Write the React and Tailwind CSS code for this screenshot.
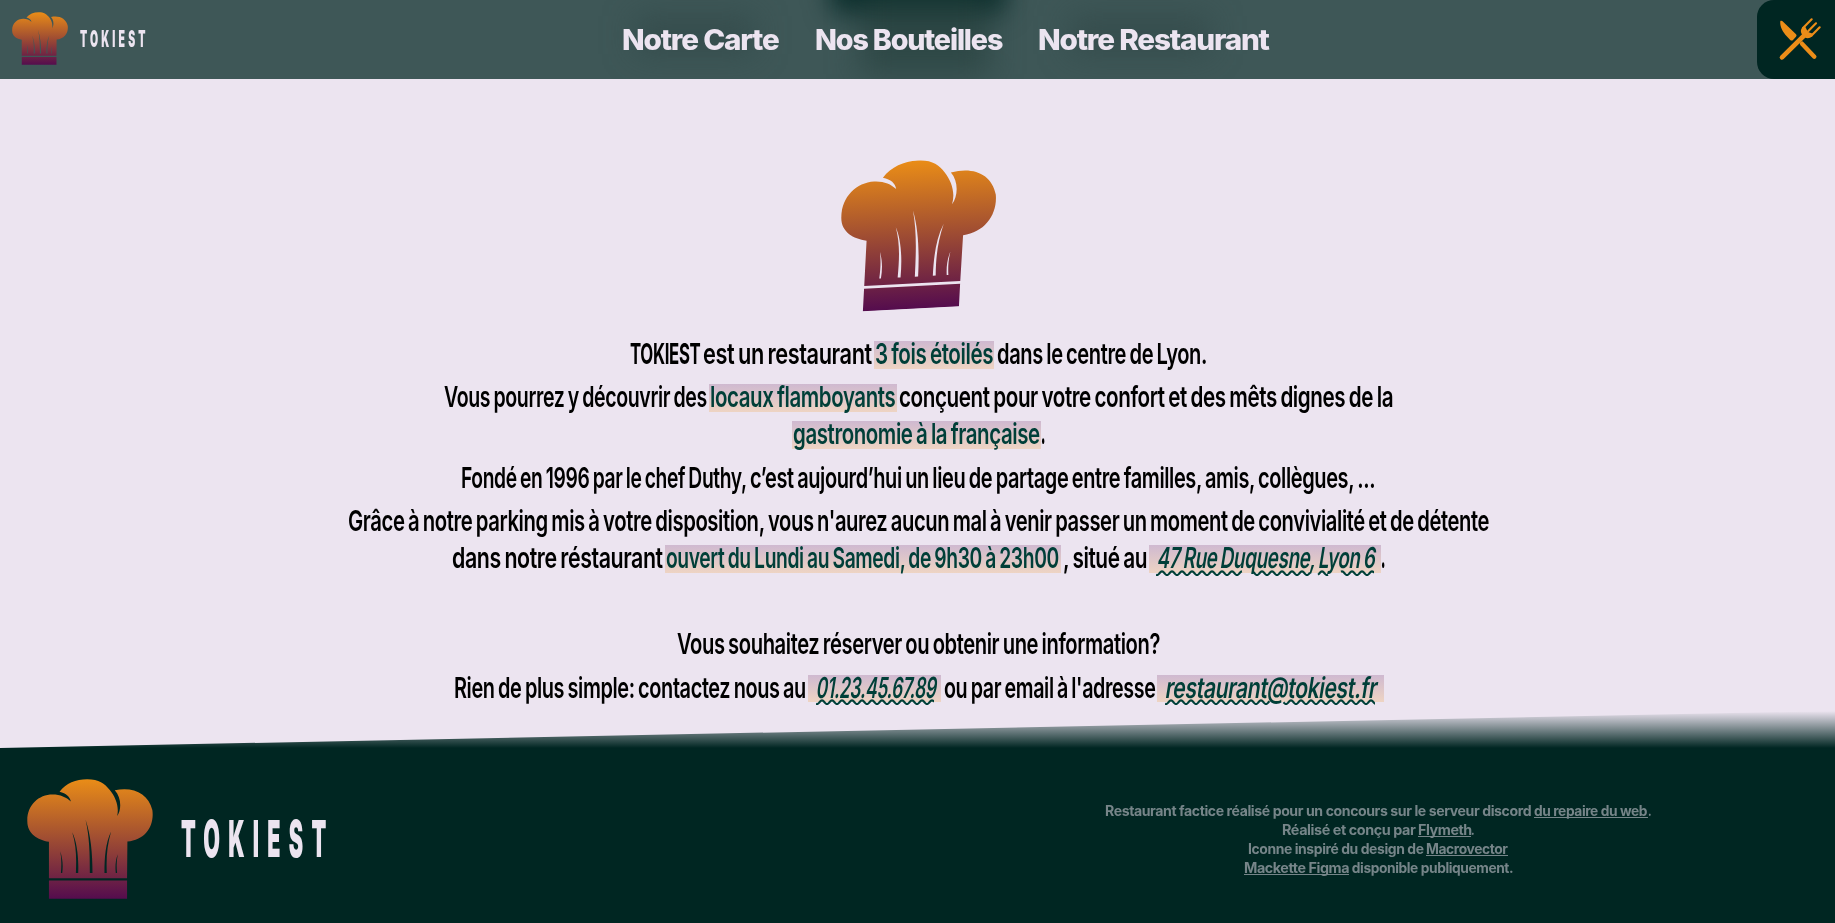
import { useId, useLayoutEffect, useRef, useState } from "react";
import clsx from "clsx";

/* Single-line text squeezed horizontally to a given width. */
function Fit({ w, className, children }) {
  const ref = useRef(null);
  const [scale, setScale] = useState(1);
  useLayoutEffect(() => {
    setScale(w / ref.current.offsetWidth);
  }, [w]);
  return (
    <span className={clsx("inline-flex shrink-0 whitespace-pre", className)} style={{ width: w }}>
      <span ref={ref} className="inline-block shrink-0 origin-left" style={{ transform: `scaleX(${scale})` }}>
        {children}
      </span>
    </span>
  );
}

function ChefHat({ className }) {
  const id = useId();
  return (
    <svg viewBox="81 237 379 359" className={className} preserveAspectRatio="none" aria-hidden="true">
      <defs>
        <linearGradient id={id} gradientUnits="userSpaceOnUse" x1="0" y1="237" x2="0" y2="596">
          <stop offset="0" stopColor="#ea8d17" />
          <stop offset="1" stopColor="#540c4e" />
        </linearGradient>
      </defs>
      <path
        fill={`url(#${id})`}
        fillRule="evenodd"
        d="M147 534V425C113 419 82 400 82 364C80 316 115 283 158 283C181 283 199 291 213 304C210 290 199 280 179 275C198 250 228 238 262 238C298 238 314 251 330 270C348 292 359 321 352 348C366 328 365 293 345 271C399 259 446 280 458 330C465 378 436 420 383 424L382 534Z
        M181 453C188 474 190 495 187 518H183C185 495 185 474 181 453Z
        M217 396C231 425 237 470 235 518H228C230 470 229 435 217 396Z
        M257 358C273 405 278 460 278 518H270C270 460 269 410 257 358Z
        M334 394C322 435 319 470 321 518H314C314 470 317 430 334 394Z
        M354 462C350 482 350 500 352 518H348C346 500 347 480 354 462Z
        M147 541H382V595H147Z"
      />
    </svg>
  );
}

function Cutlery({ className }) {
  return (
    <svg viewBox="130 50 132 132" className={className} fill="none" stroke="#ec8d18" strokeLinecap="round" aria-hidden="true">
      <path
        fill="#ec8d18"
        stroke="none"
        d="M137 62C140 60 143 62 146 65L181 99C186 103 187 106 184 109L175 119C172 122 169 121 166 118L152 103C142 91 135 76 137 62Z"
      />
      <path d="M202 130L239 169" strokeWidth="13" />
      <path d="M142 171L213 101" strokeWidth="14" />
      <path d="M231 57L205 83M244 69L221 92M255 81L230 106" strokeWidth="6.5" />
      <path fill="#ec8d18" stroke="none" d="M203 81C197 89 197 96 203 104L210 111C217 115 225 115 233 108L235 100L222 96L217 90L211 78Z" />
    </svg>
  );
}

function Wave({ w, gaps = [] }) {
  const segs = [];
  let start = 0;
  for (const [a, b] of [...gaps, [w, w]]) {
    segs.push([start, a]);
    start = b;
  }
  const d = segs
    .map(([a, b]) => {
      let p = "";
      for (let x = a; x <= b; x += 0.5) {
        p += `${p ? "L" : "M"}${x} ${(3.2 - 1.8 * Math.cos(((x - 6) * 2 * Math.PI) / 10)).toFixed(2)}`;
      }
      return p;
    })
    .join("");
  return (
    <svg width={w} height="7" className="absolute left-[7.5px] top-[24.5px]" fill="none" stroke="#004039" strokeWidth="2.1" aria-hidden="true">
      <path d={d} />
    </svg>
  );
}

function Mark({ w, children }) {
  return (
    <span className="mt-px flex h-[28px] justify-center bg-[linear-gradient(#cfb9d0,#eed4c3)] leading-[26px] text-[#003f38]" style={{ width: w }}>
      {children}
    </span>
  );
}

function MarkLink({ w, textW, waveW, gaps, href, children }) {
  return (
    <a href={href} className="relative mt-px flex h-[27.5px] bg-[linear-gradient(#cfb9d0,#eed4c3)] pl-[9px] leading-[26px] text-[#003f38]" style={{ width: w }}>
      <Fit w={textW} className="-skew-x-[9deg]">{children}</Fit>
      <Wave w={waveW} gaps={gaps} />
    </a>
  );
}

function Line({ className, children }) {
  return <span className={clsx("flex h-[37px] justify-center leading-[28px]", className ?? "pl-px")}>{children}</span>;
}

function FootLink({ w, children }) {
  return (
    <a href="#" className="inline-flex h-[16.5px] border-b border-[#768589]">
      <Fit w={w}>{children}</Fit>
    </a>
  );
}

export default function App() {
  return (
    <div className="flex h-[923px] w-[1835px] flex-col overflow-hidden bg-[#ece4f0] font-['Inter',sans-serif]">
      <header className="relative flex h-[79px] shrink-0 items-center justify-between overflow-hidden bg-[#3e5757]">
        <div className="absolute left-[830px] -top-[50px] h-[64px] w-[176px] rounded-xl bg-[#0b2e2c] blur-[13px]" />
        <div className="absolute left-[860px] -top-[10px] h-[84px] w-[130px] bg-[#233d3b]/60 blur-[16px]" />
        <div className="absolute left-[635px] top-[16px] h-[38px] w-[120px] bg-[#2c4242]/50 blur-[16px]" />
        <div className="absolute left-[1070px] top-[16px] h-[38px] w-[140px] bg-[#2c4242]/50 blur-[16px]" />

        <a href="#" className="relative flex w-[400px] items-center pl-[12px]">
          <ChefHat className="mb-[2px] h-[53px] w-[56px]" />
          <Fit w={68.5} className="ml-[12px] text-[22.5px] leading-none font-black tracking-[0.3em] text-[#ece4f0]">TOKIEST</Fit>
        </a>

        <nav className="relative flex gap-[36px] pl-[55px] pt-px text-[28.5px] font-extrabold tracking-[-0.04em] text-[#ece4f0]">
          <a href="#"><Fit w={157}>Notre Carte</Fit></a>
          <a href="#"><Fit w={187}>Nos Bouteilles</Fit></a>
          <a href="#"><Fit w={231}>Notre Restaurant</Fit></a>
        </nav>

        <div className="relative flex w-[400px] justify-end">
          <button className="flex h-[79px] w-[78px] items-center rounded-l-[17px] bg-[#002622] pl-[21px]">
            <Cutlery className="mb-[2px] size-[44px]" />
          </button>
        </div>
      </header>

      <main className="flex h-[632px] shrink-0 flex-col items-center pt-[81px] text-[29px] font-semibold text-black">
        <ChefHat className="h-[149px] w-[154.5px] -skew-x-3 -skew-y-3" />

        <div className="mt-[30.9px] flex flex-col gap-[6.5px] tracking-[-0.02em] [word-spacing:-0.06em]">
          <p>
            <Line>
              <Fit w={73} className="font-bold">{"TOKIEST "}</Fit>
              <Fit w={169}>est un restaurant</Fit>
              <span className="ml-[2px] mr-[2.5px]"><Mark w={120.5}><Fit w={118}>3 fois étoilés</Fit></Mark></span>
              <Fit w={210}>dans le centre de Lyon.</Fit>
            </Line>
          </p>
          <p>
            <Line>
              <Fit w={263}>Vous pourrez y découvrir des</Fit>
              <span className="ml-[2px] mr-[2px]"><Mark w={188}><Fit w={185}>locaux flamboyants</Fit></Mark></span>
              <Fit w={494}>conçuent pour votre confort et des mêts dignes de la</Fit>
            </Line>
            <Line>
              <Mark w={249}><Fit w={247}>gastronomie à la française</Fit></Mark>
              <Fit w={4} className="font-black">.</Fit>
            </Line>
          </p>
          <p>
            <Line>
              <Fit w={289}>{"Fondé en 1996 par le chef Duthy, "}</Fit>
              <Fit w={625}>c’est aujourd’hui un lieu de partage entre familles, amis, collègues, ...</Fit>
            </Line>
          </p>
          <p>
            <Line>
              <Fit w={420}>{"Grâce à notre parking mis à votre disposition, "}</Fit>
              <Fit w={721}>vous n'aurez aucun mal à venir passer un moment de convivialité et de détente</Fit>
            </Line>
            <Line>
              <Fit w={211}>dans notre réstaurant</Fit>
              <span className="ml-[2px] mr-[1.5px]"><Mark w={396.5}><Fit w={393}>ouvert du Lundi au Samedi, de 9h30 à 23h00</Fit></Mark></span>
              <Fit w={84}>, situé au</Fit>
              <span className="ml-[2px]">
                <MarkLink href="#" w={232} textW={218} waveW={218} gaps={[[86, 96], [154, 162], [172, 185]]}>47 Rue Duquesne, Lyon 6</MarkLink>
              </span>
              <Fit w={4} className="font-black">.</Fit>
            </Line>
          </p>
          <p className="mt-[42.5px]">
            <Line><Fit w={483}>Vous souhaitez réserver ou obtenir une information?</Fit></Line>
          </p>
          <p>
            <Line className="pl-[3px]">
              <Fit w={352}>Rien de plus simple: contactez nous au</Fit>
              <span className="ml-[2px] mr-[2.5px]"><MarkLink href="#" w={133} textW={120} waveW={118}>01.23.45.67.89</MarkLink></span>
              <Fit w={211.5}>ou par email à l'adresse</Fit>
              <span className="ml-[2px]">
                <MarkLink href="#" w={227} textW={211} waveW={210.5} gaps={[[104.5, 118.5]]}>restaurant@tokiest.fr</MarkLink>
              </span>
            </Line>
          </p>
        </div>
      </main>

      <footer className="shrink-0">
        <div className="h-[37px] bg-[linear-gradient(transparent,#002622)] [clip-path:polygon(0_100%,100%_0,100%_100%)]" />
        <div className="flex h-[175px] justify-between bg-[#002622]">
          <div className="flex items-start pl-[27px] pt-[31px]">
            <ChefHat className="h-[120px] w-[126px]" />
            <Fit w={153.5} className="ml-[28px] mt-[33px] text-[51.5px] leading-[52px] font-black tracking-[0.38em] text-[#ece4f0]">TOKIEST</Fit>
          </div>
          <div className="flex w-[914px] flex-col items-center pt-[53px] text-[14.2px] leading-[19px] font-bold tracking-[-0.03em] text-[#768589]">
            <p className="flex h-[19px]"><Fit w={429}>{"Restaurant factice réalisé pour un concours sur le serveur discord "}</Fit><FootLink w={113.5}>du repaire du web</FootLink><Fit w={3}>.</Fit></p>
            <p className="flex h-[19px]"><Fit w={136}>{"Réalisé et conçu par "}</Fit><FootLink w={53.5}>Flymeth</FootLink><Fit w={3}>.</Fit></p>
            <p className="flex h-[19px]"><Fit w={178}>{"Iconne inspiré du design de "}</Fit><FootLink w={82}>Macrovector</FootLink></p>
            <p className="flex h-[19px]"><FootLink w={105}>Mackette Figma</FootLink><Fit w={164}>{" disponible publiquement."}</Fit></p>
          </div>
        </div>
      </footer>
    </div>
  );
}
